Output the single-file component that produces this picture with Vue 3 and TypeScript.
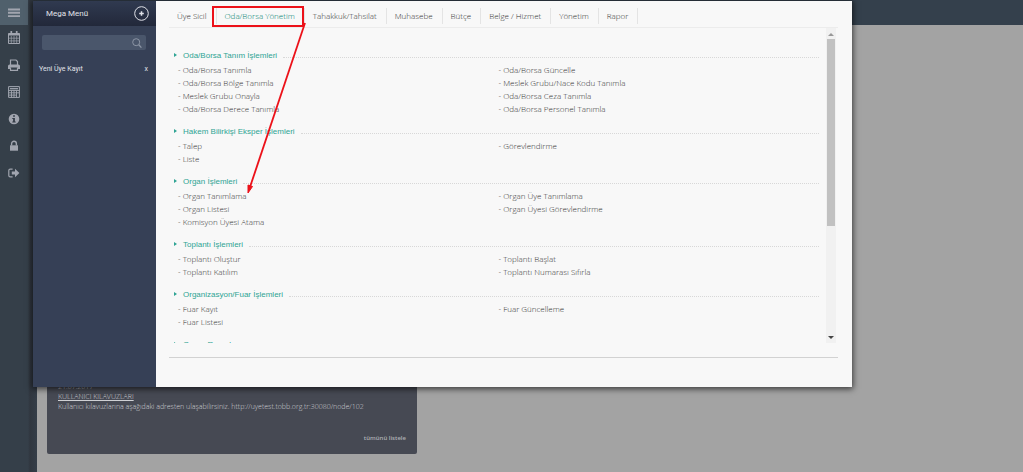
<script setup lang="ts">
interface MenuSection {
  title: string
  left: string[]
  right: string[]
}

const tabs: string[] = ['Üye Sicil', 'Oda/Borsa Yönetim', 'Tahakkuk/Tahsilat', 'Muhasebe', 'Bütçe', 'Belge / Hizmet', 'Yönetim', 'Rapor']
const activeTab = 'Oda/Borsa Yönetim'

const sections: MenuSection[] = [
  {
    title: 'Oda/Borsa Tanım İşlemleri',
    left: ['Oda/Borsa Tanımla', 'Oda/Borsa Bölge Tanımla', 'Meslek Grubu Onayla', 'Oda/Borsa Derece Tanımla'],
    right: ['Oda/Borsa Güncelle', 'Meslek Grubu/Nace Kodu Tanımla', 'Oda/Borsa Ceza Tanımla', 'Oda/Borsa Personel Tanımla'],
  },
  { title: 'Hakem Bilirkişi Eksper İşlemleri', left: ['Talep', 'Liste'], right: ['Görevlendirme'] },
  {
    title: 'Organ İşlemleri',
    left: ['Organ Tanımlama', 'Organ Listesi', 'Komisyon Üyesi Atama'],
    right: ['Organ Üye Tanımlama', 'Organ Üyesi Görevlendirme'],
  },
  { title: 'Toplantı İşlemleri', left: ['Toplantı Oluştur', 'Toplantı Katılım'], right: ['Toplantı Başlat', 'Toplantı Numarası Sıfırla'] },
  { title: 'Organizasyon/Fuar İşlemleri', left: ['Fuar Kayıt', 'Fuar Listesi'], right: ['Fuar Güncelleme'] },
  { title: 'Organ Raporları', left: [], right: [] },
]
</script>

<template>
  <div class="page">
    <nav class="rail" aria-label="Kısayollar">
      <button class="rail-btn current" aria-label="Menü">
        <svg width="12" height="10" viewBox="0 0 12 10"><path d="M0 1.5h12M0 4.8h12M0 8.1h12" stroke="currentColor" stroke-width="1.9" /></svg>
      </button>
      <button class="rail-btn" aria-label="Takvim">
        <svg width="12" height="13" viewBox="0 0 12 13" fill="none" stroke="currentColor">
          <path d="M.5 2.5h11v10H.5z" /><path d="M.5 3.5h11" stroke-width="2" /><path d="M3.3 0v4M8.7 0v4" stroke-width="1.7" />
          <path d="M3.3 5v7M6 5v7M8.7 5v7M1 7.2h10M1 9.9h10" stroke-width=".7" />
        </svg>
      </button>
      <button class="rail-btn" aria-label="Yazdır">
        <svg width="12" height="12" viewBox="0 0 12 12" fill="none" stroke="currentColor">
          <path d="M2.5 6V1h5.5l1.5 1.5V6" stroke-width="1.2" />
          <path d="M0 7a1.6 1.6 0 0 1 1.6-1.6h8.8A1.6 1.6 0 0 1 12 7v3H9.8V8.4H2.2V10H0z" fill="currentColor" stroke="none" />
          <path d="M2.5 8.5v2.8h7V8.5" stroke-width="1.2" />
        </svg>
      </button>
      <button class="rail-btn" aria-label="Hesap">
        <svg width="12" height="12" viewBox="0 0 12 12" fill="none" stroke="currentColor">
          <path d="M.6.6h10.8v10.8H.6z" /><path d="M2 2.7h8" stroke-width="1.3" />
          <path d="M1 4.5h10M1 6.8h10M1 9.1h7M3.5 4.5v7M6 4.5v7M8.5 4.5v7" stroke-width=".9" />
        </svg>
      </button>
      <button class="rail-btn" aria-label="Bilgi">
        <svg width="12" height="12" viewBox="0 0 12 12">
          <circle cx="6" cy="6" r="5.3" fill="currentColor" /><path d="M5.1 2.2h1.8v1.6H5.1zM4.3 4.9h2.6v3.5h.8v1.1H4.3V8.4h.8V6h-.8z" fill="#333b46" />
        </svg>
      </button>
      <button class="rail-btn" aria-label="Kilitle">
        <svg width="10" height="12" viewBox="0 0 10 12">
          <path d="M1 5.3h8v5.4H1z" fill="currentColor" /><path d="M2.6 5.5V3.7a2.4 2.4 0 0 1 4.8 0v1.8" fill="none" stroke="currentColor" stroke-width="1.4" />
        </svg>
      </button>
      <button class="rail-btn" aria-label="Çıkış">
        <svg width="12" height="10" viewBox="0 0 12 10">
          <path d="M4.6 1.2H2.2A1.4 1.4 0 0 0 .8 2.6v4.8a1.4 1.4 0 0 0 1.4 1.4h2.4" fill="none" stroke="currentColor" stroke-width="1.2" />
          <path d="M3.8 3.4H7V.8L11.4 5 7 9.2V6.6H3.8z" fill="currentColor" />
        </svg>
      </button>
    </nav>

    <main class="main">
      <header class="topbar"></header>
      <section class="news">
        <span class="date">21.07.2017</span>
        <a class="news-title" href="#">KULLANICI KILAVUZLARI</a>
        <p class="news-text">Kullanıcı kılavuzlarına aşağıdaki adresten ulaşabilirsiniz. http://uyetest.tobb.org.tr:30080/node/102</p>
        <a class="all" href="#">tümünü listele</a>
      </section>
    </main>

    <div class="mega">
      <aside class="side">
        <div class="side-head">
          <span>Mega Menü</span>
          <button class="add" aria-label="Ekle">
            <svg width="15" height="15" viewBox="0 0 15 15" fill="none" stroke="currentColor">
              <circle cx="7.5" cy="7.5" r="6.8" stroke-width="1" /><path d="M5.2 7.5h4.6M7.5 5.2v4.6" stroke-width="1.5" />
            </svg>
          </button>
        </div>
        <label class="search">
          <input type="text" aria-label="Ara" />
          <svg width="10" height="10" viewBox="0 0 10 10" fill="none" stroke="currentColor"><circle cx="4.2" cy="4.2" r="3.5" /><path d="M6.8 6.8 9.4 9.6" stroke-width="1.3" /></svg>
        </label>
        <div class="recent">
          <a href="#">Yeni Üye Kayıt</a>
          <button aria-label="Kaldır">x</button>
        </div>
      </aside>

      <div class="panel">
        <div class="tabs">
          <button v-for="tab in tabs" :key="tab" class="tab" :class="{ active: tab === activeTab }">{{ tab }}</button>
        </div>
        <div class="scroller">
          <div class="sections">
            <section v-for="s in sections" :key="s.title" class="group">
              <h2>
                <svg width="3" height="4" viewBox="0 0 3 4"><path d="M0 0 3 2 0 4z" fill="currentColor" /></svg>
                <span>{{ s.title }}</span>
              </h2>
              <div class="cols">
                <ul><li v-for="item in s.left" :key="item">- <a href="#">{{ item }}</a></li></ul>
                <ul><li v-for="item in s.right" :key="item">- <a href="#">{{ item }}</a></li></ul>
              </div>
            </section>
          </div>
          <div class="bar" aria-hidden="true">
            <svg class="up" width="6" height="3" viewBox="0 0 6 3"><path d="M0 3 3 0l3 3z" fill="currentColor" /></svg>
            <span class="thumb"></span>
            <svg width="6" height="3" viewBox="0 0 6 3"><path d="M0 0h6L3 3z" fill="currentColor" /></svg>
          </div>
        </div>
      </div>
    </div>

    <svg class="callout" width="320" height="200" viewBox="0 0 320 200" aria-hidden="true">
      <rect x="213" y="7" width="90" height="19" fill="none" stroke="#ec1119" stroke-width="2" />
      <path d="M305 23 250 187" stroke="#ec1119" stroke-width="1.8" />
      <path d="M248 193 248 185 252.500 186.500z" fill="#ec1119" stroke="#ec1119" />
    </svg>
  </div>
</template>

<style>
body {
  margin: 0;
  background: #a3a3a3;
}
</style>

<style scoped>
.page {
  position: relative;
  display: flex;
  min-height: 100vh;
  overflow: hidden;
  font-family: "Open Sans", "Noto Sans", sans-serif;
  font-size: 7px;
  color: #333;
}
button {
  border: 0;
  padding: 0;
  background: none;
  font: inherit;
  color: inherit;
}
a {
  color: inherit;
  text-decoration: none;
}
svg {
  display: block;
  flex: none;
}
.rail {
  box-sizing: border-box;
  flex: none;
  width: 37px;
  background: linear-gradient(90deg, #353f49 0 28px, #30363f 30px, #343d48);
  color: #a1a5af;
}
.rail-btn {
  display: flex;
  align-items: center;
  justify-content: center;
  width: 28px;
  height: 27px;
}
.rail-btn.current {
  height: 25px;
  margin-bottom: -1px;
  background: #50606c;
}
.main {
  display: flex;
  flex: 1;
  flex-direction: column;
  justify-content: space-between;
  background: #a3a3a3;
}
.topbar {
  height: 25px;
  background: #34404c;
}
.news {
  box-sizing: border-box;
  display: flex;
  flex-direction: column;
  width: 370px;
  height: 94px;
  margin: 0 0 18px 10px;
  padding: 22px 11px 11px;
  border-radius: 2px;
  background: #464953;
  color: #cfd0d4;
  font-weight: 300;
  line-height: 10px;
}
.news-title {
  align-self: flex-start;
  text-decoration: underline;
}
.news-text {
  margin: 0;
}
.all {
  align-self: flex-end;
  margin-top: auto;
  color: #b0b1b6;
  font-size: 6px;
  font-weight: 600;
}
.mega {
  position: absolute;
  top: 1px;
  left: 33px;
  right: 171px;
  display: flex;
  min-height: 386px;
  background: #f8f8f8;
  box-shadow: 0 1px 6px 1px rgba(0, 0, 0, 0.65);
}
.side {
  flex: none;
  width: 123px;
  background: #364056;
  color: #e0e2e8;
  font-family: Roboto, sans-serif;
}
.side-head {
  display: flex;
  align-items: center;
  justify-content: space-between;
  height: 25px;
  padding: 0 7px 0 13px;
  background: linear-gradient(#303a50, #22283a);
  font-size: 8px;
}
.search {
  display: flex;
  align-items: center;
  height: 15px;
  margin: 9px 10px 0 9px;
  padding-right: 4px;
  border-radius: 2px;
  background: #4a566b;
  color: #8c95a5;
}
.search input {
  flex: 1;
  min-width: 0;
  border: 0;
  padding: 0 4px;
  outline: 0;
  background: none;
  color: #fff;
  font: inherit;
}
.recent {
  display: flex;
  justify-content: space-between;
  margin: 14px 8px 0 6px;
  line-height: 10px;
}
.panel {
  flex: 1;
  min-width: 0;
  padding: 0 14px 28px 13px;
}
.tabs {
  display: flex;
  align-items: center;
  height: 27px;
  border-bottom: 1px solid #ececec;
  padding-top: 3px;
  box-sizing: border-box;
  font-size: 8px;
  font-weight: 300;
}
.tab {
  height: 16px;
  padding: 0 9px 0 8px;
  border-right: 1px solid #e4e4e4;
  white-space: nowrap;
}
.tab.active {
  color: #007f6e;
}
.scroller {
  display: flex;
  height: 315px;
  padding-bottom: 14px;
  border-bottom: 1px solid #d2d2d2;
}
.sections {
  flex: 1;
  min-width: 0;
  overflow: hidden;
  padding: 21px 7px 0 5px;
  box-sizing: border-box;
}
.group {
  margin-bottom: 10px;
}
h2 {
  display: flex;
  align-items: center;
  gap: 6px;
  height: 12px;
  margin: 0 0 2px;
  color: #2fa494;
  font-family: "Liberation Sans", sans-serif;
  font-size: 8px;
  font-weight: 400;
}
h2::after {
  content: "";
  flex: 1;
  align-self: flex-end;
  margin-bottom: 3px;
  border-bottom: 1px dotted #d8d8d8;
}
.cols {
  display: grid;
  grid-template-columns: 1fr 1fr;
  padding-left: 4px;
}
ul {
  margin: 0;
  padding: 0;
  list-style: none;
}
li {
  height: 13px;
  font-size: 8px;
  font-weight: 300;
  line-height: 13px;
  white-space: nowrap;
}
.bar {
  display: flex;
  flex: none;
  flex-direction: column;
  align-items: center;
  width: 10px;
  margin-right: 2px;
  padding: 5px 0 4px;
  box-sizing: border-box;
  background: #f1f1f1;
  color: #444;
}
.up {
  color: #999;
}
.thumb {
  width: 8px;
  height: 61%;
  margin: 3px 0 auto;
  background: #c1c1c1;
}
.callout {
  position: absolute;
  top: 0;
  left: 0;
  pointer-events: none;
}
</style>
